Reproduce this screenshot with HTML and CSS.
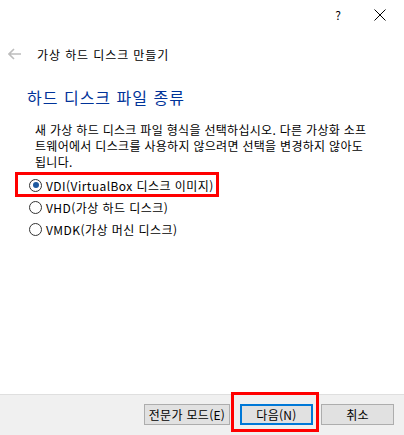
FILE: index.html
```html
<!DOCTYPE html>
<html lang="ko">
<head>
    <meta charset="UTF-8">
    <meta name="viewport" content="width=device-width, initial-scale=1.0">
    <title>가상 하드 디스크 만들기</title>
    <link rel="stylesheet" href="styles.css">
</head>
<body>
    <div class="dialog">
        <div class="titlebar">
            <span class="help">?</span>
            <svg class="close" width="12" height="12" viewBox="0 0 12 12">
                <path d="M0.5 0.5 L11.5 11.5 M11.5 0.5 L0.5 11.5" stroke="#000" stroke-width="1" fill="none"/>
            </svg>
        </div>

        <div class="nav">
            <svg class="back" width="14" height="12" viewBox="0 0 14 12">
                <path d="M1 6 H13 M6 1 L1 6 L6 11" stroke="#bdbdbd" stroke-width="1.6" fill="none"/>
            </svg>
            <span class="nav-title">가상 하드 디스크 만들기</span>
        </div>

        <div class="content">
            <h1 class="heading">하드 디스크 파일 종류</h1>
            <div class="desc">
                <div class="desc-line">새 가상 하드 디스크 파일 형식을 선택하십시오. 다른 가상화 소프</div>
                <div class="desc-line">트웨어에서 디스크를 사용하지 않으려면 선택을 변경하지 않아도</div>
                <div class="desc-line">됩니다.</div>
            </div>

            <div class="options">
                <label class="option"><span class="radio checked"></span>VDI(VirtualBox 디스크 이미지)</label>
                <label class="option"><span class="radio"></span>VHD(가상 하드 디스크)</label>
                <label class="option"><span class="radio"></span>VMDK(가상 머신 디스크)</label>
            </div>
        </div>

        <div class="footer">
            <button class="btn btn-wide">전문가 모드(E)</button>
            <button class="btn btn-default">다음(N)</button>
            <button class="btn">취소</button>
        </div>

        <!-- annotation boxes -->
        <div class="mark mark-vdi"></div>
        <div class="mark mark-next"></div>
    </div>
</body>
</html>
```

FILE: styles.css
```css
body {
    margin: 0;
    font-family: "Noto Sans CJK KR", "Noto Sans", sans-serif;
    font-size: 12px;
    color: #000;
    background: #fff;
}
.dialog {
    position: relative;
    width: 404px;
    height: 435px;
    display: flex;
    flex-direction: column;
    overflow: hidden;
}
.titlebar {
    height: 30px;
    display: flex;
    align-items: center;
    justify-content: flex-end;
    padding-right: 18px;
    gap: 33px;
}
.help {
    font-size: 12px;
    line-height: 12px;
}
.close {
    display: block;
}
.nav {
    height: 44px;
    display: flex;
    align-items: center;
    padding-left: 8px;
    margin-top: 2px;
}
.back {
    display: block;
}
.nav-title {
    margin-left: 15px;
    font-size: 12px;
    letter-spacing: 0.9px;
}
.content {
    flex: 1;
    padding-left: 35px;
}
.heading {
    margin: 10px 0 0 -8px;
    font-size: 16px;
    font-weight: normal;
    color: #003399;
    line-height: 22px;
    letter-spacing: 1px;
}
.desc {
    margin-top: 14px;
    font-size: 12px;
    letter-spacing: 0.3px;
}
.desc-line {
    height: 16px;
    line-height: 16px;
    white-space: nowrap;
}
.options {
    margin-top: 4px;
    display: flex;
    flex-direction: column;
}
.option {
    height: 22px;
    display: flex;
    align-items: center;
    font-size: 12px;
    letter-spacing: 0.45px;
}
.radio {
    width: 11px;
    height: 11px;
    border: 1px solid #333;
    border-radius: 50%;
    margin-left: -6px;
    margin-right: 4px;
    background: #fff;
    position: relative;
}
.radio.checked::after {
    content: "";
    position: absolute;
    left: 2.5px;
    top: 2.5px;
    width: 6px;
    height: 6px;
    border-radius: 50%;
    background: #1e5aa0;
}
.footer {
    height: 41px;
    background: #f0f0f0;
    border-top: 1px solid #dfdfdf;
    display: flex;
    align-items: flex-start;
    justify-content: flex-end;
    padding: 9px 10px 0 0;
    box-sizing: border-box;
    gap: 8px;
}
.btn {
    width: 73px;
    height: 21px;
    border: 1px solid #adadad;
    background: #e1e1e1;
    font-family: inherit;
    font-size: 12px;
    padding: 0;
    color: #000;
    letter-spacing: 0.3px;
}
.btn-wide {
    width: 86px;
    margin-right: 2px;
}
.btn-default {
    border: 2px solid #0078d7;
}
.mark {
    position: absolute;
    border: 3px solid #ff0000;
    box-sizing: border-box;
}
.mark-vdi {
    left: 15px;
    top: 172px;
    width: 204px;
    height: 25px;
}
.mark-next {
    left: 231px;
    top: 392px;
    width: 88px;
    height: 40px;
}
```
